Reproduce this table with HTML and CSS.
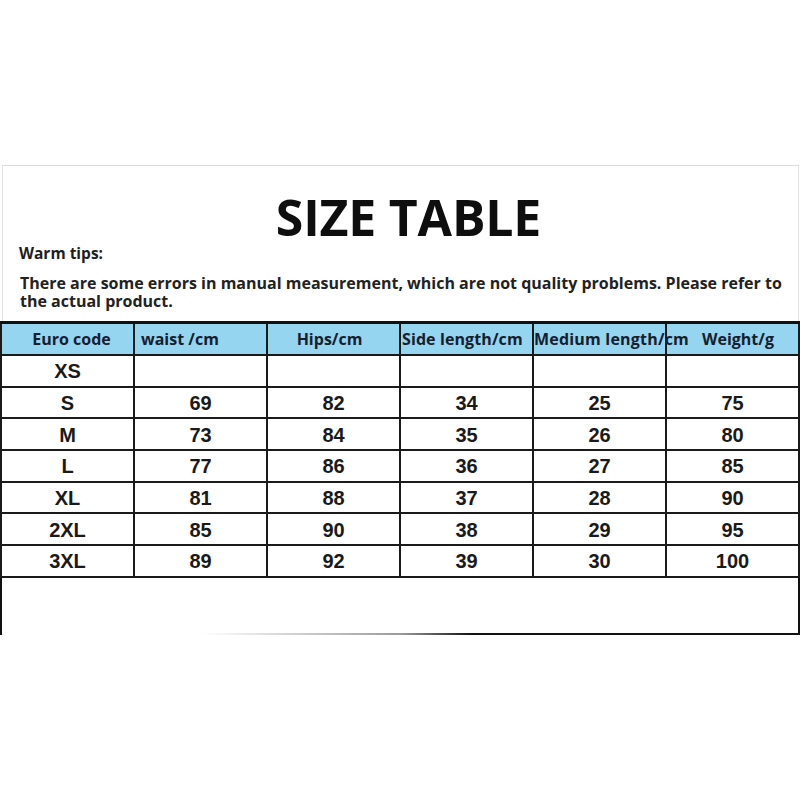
FILE: index.html
```html
<!DOCTYPE html>
<html lang="en">
<head>
<meta charset="utf-8">
<title>Size Table</title>
<link rel="stylesheet" href="styles.css">
</head>
<body>
<div class="sheet">
  <div class="intro">
    <h1 class="title">SIZE TABLE</h1>
    <div class="tips-label">Warm tips:</div>
    <p class="tips-text">There are some errors in manual measurement, which are not quality problems. Please refer to the actual product.</p>
  </div>
  <table class="size-table">
    <colgroup>
      <col class="c1"><col class="c2"><col class="c3"><col class="c4"><col class="c5"><col class="c6">
    </colgroup>
    <thead>
      <tr>
        <th class="h-euro">Euro code</th>
        <th class="h-waist">waist /cm</th>
        <th class="h-hips">Hips/cm</th>
        <th class="h-side">Side length/cm</th>
        <th class="h-medium">Medium length/cm</th>
        <th class="h-weight">Weight/g</th>
      </tr>
    </thead>
    <tbody>
      <tr><td>XS</td><td></td><td></td><td></td><td></td><td></td></tr>
      <tr><td>S</td><td>69</td><td>82</td><td>34</td><td>25</td><td>75</td></tr>
      <tr><td>M</td><td>73</td><td>84</td><td>35</td><td>26</td><td>80</td></tr>
      <tr><td>L</td><td>77</td><td>86</td><td>36</td><td>27</td><td>85</td></tr>
      <tr><td>XL</td><td>81</td><td>88</td><td>37</td><td>28</td><td>90</td></tr>
      <tr><td>2XL</td><td>85</td><td>90</td><td>38</td><td>29</td><td>95</td></tr>
      <tr><td>3XL</td><td>89</td><td>92</td><td>39</td><td>30</td><td>100</td></tr>
    </tbody>
  </table>
  <div class="foot"></div>
</div>
</body>
</html>
```

FILE: styles.css
```css
html, body {
  margin: 0;
  padding: 0;
  background: #ffffff;
}

body {
  width: 800px;
  height: 800px;
  overflow: hidden;
}

.sheet {
  padding-top: 165px;
  width: 800px;
}

.intro {
  margin: 0 1px 0 2px;
  height: 156px;
  border-top: 1px solid #dcdcdc;
  border-left: 1px solid #e2e2e2;
  border-right: 1px solid #e2e2e2;
  box-sizing: border-box;
  font-family: "Open Sans", "Noto Sans", sans-serif;
  color: #1c1c1c;
}

.title {
  margin: 21px 0 0 0;
  padding-left: 16px;
  font-size: 50px;
  line-height: 60px;
  font-weight: 700;
  text-align: center;
  color: #0e0e0e;
  letter-spacing: -0.2px;
}

.tips-label {
  margin: -4px 0 0 16px;
  font-size: 15.5px;
  line-height: 20px;
  font-weight: 700;
  color: #1e1e1e;
}

.tips-text {
  margin: 11px 0 0 17px;
  font-size: 16px;
  line-height: 18px;
  font-weight: 700;
  color: #222;
  width: 770px;
}

.size-table {
  width: 800px;
  border-collapse: collapse;
  table-layout: fixed;
  border-top: 3px solid #111;
  border-left: 2px solid #111;
  border-right: 2px solid #111;
}

.c1 { width: 133px; }
.c2 { width: 133px; }
.c3 { width: 133px; }
.c4 { width: 133px; }
.c5 { width: 133px; }
.c6 { width: 133px; }

.size-table th {
  height: 30px;
  padding: 0;
  background: #95d5f0;
  border: 2px solid #1a1a1a;
  border-top: none;
  font-family: "Open Sans", "Noto Sans", sans-serif;
  font-weight: 700;
  font-size: 16px;
  color: #15202e;
  white-space: nowrap;
  text-align: center;
  overflow: visible;
}

.size-table th.h-euro {
  padding-left: 8px;
}

.size-table th.h-waist {
  text-align: left;
  padding-left: 6px;
}

.size-table th.h-hips {
  padding-right: 8px;
}

.size-table th.h-side {
  text-align: left;
  padding-left: 1px;
  letter-spacing: 0.1px;
}

.size-table th.h-medium {
  text-align: left;
  padding-left: 0;
  letter-spacing: 0.2px;
}

.size-table th.h-weight {
  text-align: left;
  padding-left: 35px;
}

.size-table td {
  height: 27.7px;
  padding: 2px 0 0 0;
  border: 2px solid #1a1a1a;
  font-family: "Liberation Sans", Arial, sans-serif;
  font-weight: 700;
  font-size: 20px;
  color: #1a1a1a;
  text-align: center;
}

.foot {
  height: 57px;
  border-left: 2px solid #111;
  border-right: 2px solid #111;
  box-sizing: border-box;
  background: linear-gradient(to right, rgba(0,0,0,0) 0, rgba(0,0,0,0) 200px, #9a9a9a 400px, #111 470px, #111 100%) no-repeat left bottom / 100% 2px;
}
```
